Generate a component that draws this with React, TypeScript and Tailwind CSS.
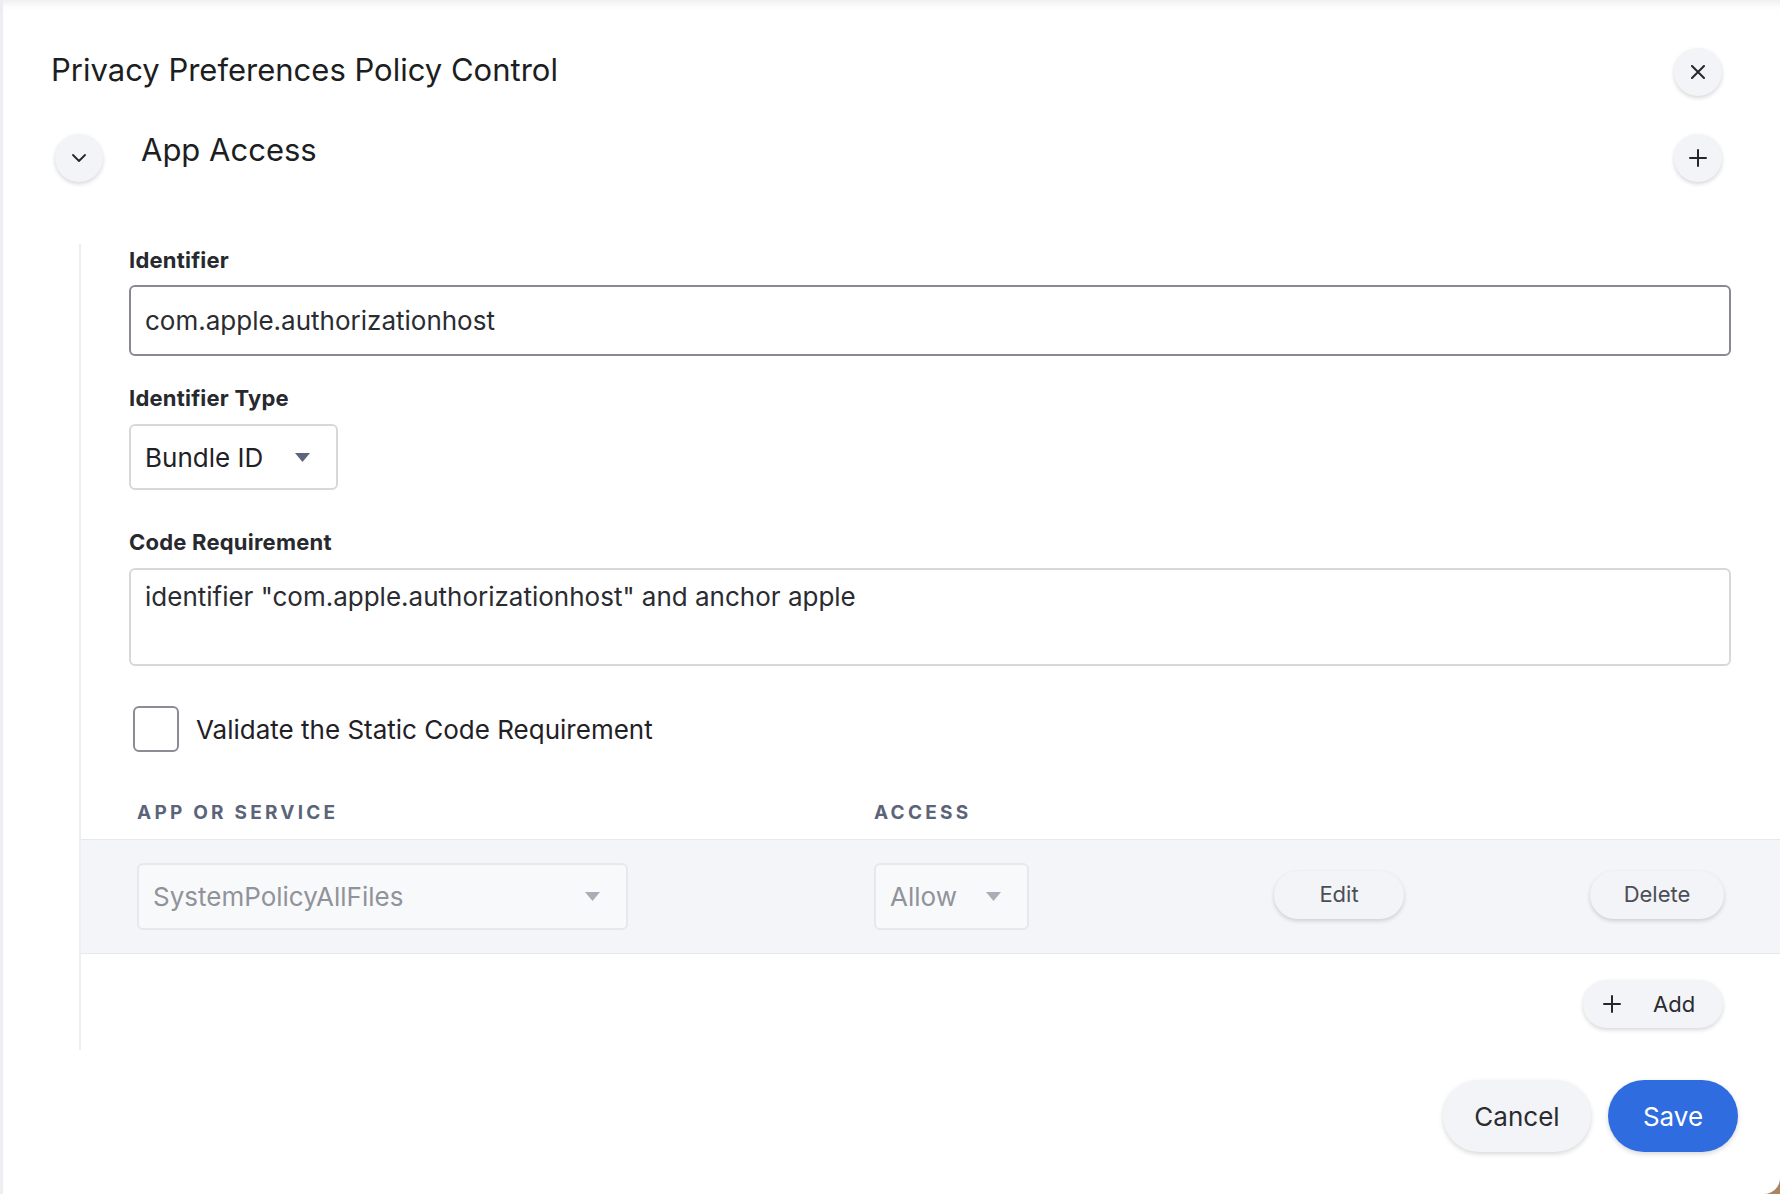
import React from "react";

const font = { fontFamily: "Inter, 'Liberation Sans', sans-serif" };

const Caret = ({ color }: { color: string }) => (
    <svg width="15" height="9" viewBox="0 0 15 9">
        <path d="M0 0 L15 0 L7.5 9 Z" fill={color} />
    </svg>
);

const CircleButton = ({ children }: { children: React.ReactNode }) => (
    <button className="flex h-[48px] w-[48px] items-center justify-center rounded-full bg-[#f3f4f7] shadow-[0_2px_4px_rgba(0,0,0,0.16)]">
        {children}
    </button>
);

const PillButton = ({ label, width }: { label: string; width: string }) => (
    <button
        className={`flex h-[48px] ${width} items-center justify-center rounded-full bg-[#f3f4f7] text-[22px] text-[#4b4e55] shadow-[0_2px_4px_rgba(0,0,0,0.16)]`}
    >
        {label}
    </button>
);

export default function App() {
    return (
        <div className="flex h-[1194px] w-[1780px] bg-[#a8845f]" style={font}>
            {/* left edge */}
            <div className="w-[3px] bg-[#eceef2]" />

            <div className="flex-1 rounded-br-[16px] bg-white shadow-[inset_0_9px_8px_-6px_rgba(0,0,0,0.08)]">
                {/* Title row */}
                <div className="flex h-[96px] items-end justify-between pl-[48px] pr-[58px]">
                    <h1 className="mb-[8px] text-[31px] leading-[36px] text-[#1c1e22]">
                        Privacy Preferences Policy Control
                    </h1>
                    <CircleButton>
                        <svg width="14" height="14" viewBox="0 0 14 14">
                            <path d="M1 1 L13 13 M13 1 L1 13" stroke="#25272c" strokeWidth="2" strokeLinecap="round" />
                        </svg>
                    </CircleButton>
                </div>

                {/* Section header */}
                <div className="mt-[38px] flex items-start pl-[52px] pr-[58px]">
                    <CircleButton>
                        <svg width="14" height="8" viewBox="0 0 14 8">
                            <path d="M1 1 L7 7 L13 1" fill="none" stroke="#25272c" strokeWidth="1.8" strokeLinecap="round" strokeLinejoin="round" />
                        </svg>
                    </CircleButton>
                    <h2 className="ml-[38px] mt-[-3px] flex-1 text-[31px] leading-[38px] text-[#1c1e22]">
                        App Access
                    </h2>
                    <CircleButton>
                        <svg width="18" height="18" viewBox="0 0 18 18">
                            <path d="M9 1 L9 17 M1 9 L17 9" stroke="#25272c" strokeWidth="2" strokeLinecap="round" />
                        </svg>
                    </CircleButton>
                </div>

                {/* Section body */}
                <div className="ml-[76px] mt-[62px] border-l-2 border-[#eceef1] pb-[22px] pt-[4px]">
                    <div className="pl-[48px] pr-[49px]">
                        <label className="block text-[22px] font-bold leading-[24px] tracking-[0.01em] text-[#27292e]">
                            Identifier
                        </label>
                        <div className="mt-[13px] flex h-[71px] items-center rounded-[6px] border-2 border-[#878b91] px-[14px] text-[26px] text-[#2a2c31]">
                            com.apple.authorizationhost
                        </div>

                        <label className="mt-[30px] block text-[22px] font-bold leading-[24px] tracking-[0.01em] text-[#27292e]">
                            Identifier Type
                        </label>
                        <div className="mt-[14px] flex h-[66px] w-[209px] items-center justify-between rounded-[6px] border-2 border-[#d6d8dc] pl-[14px] pr-[26px] text-[26px] text-[#1f2126]">
                            <span>Bundle ID</span>
                            <Caret color="#5c6579" />
                        </div>

                        <label className="mt-[40px] block text-[22px] font-bold leading-[24px] tracking-[0.01em] text-[#27292e]">
                            Code Requirement
                        </label>
                        <div className="mt-[14px] h-[98px] rounded-[6px] border-2 border-[#d6d8dc] px-[14px] pt-[11px] text-[26px] leading-[32px] text-[#2a2c31]">
                            identifier "com.apple.authorizationhost" and anchor apple
                        </div>

                        <div className="mt-[40px] flex items-center">
                            <div className="ml-[4px] h-[46px] w-[46px] rounded-[6px] border-2 border-[#8a8d93]" />
                            <span className="ml-[17px] text-[26px] text-[#1f2126]">
                                Validate the Static Code Requirement
                            </span>
                        </div>
                    </div>

                    {/* Table */}
                    <div className="mt-[50px] flex pl-[56px] text-[19px] font-bold leading-[22px] tracking-[0.17em] text-[#5b6478]">
                        <span className="w-[737px]">APP OR SERVICE</span>
                        <span>ACCESS</span>
                    </div>
                    <div className="mt-[15px] flex h-[115px] items-center border-y border-[#e6e8ec] bg-[#f4f5f8] pl-[56px] pr-[56px]">
                        <div className="flex h-[67px] w-[491px] items-center justify-between rounded-[6px] border-2 border-[#e6e8ec] bg-[#f8f9fb] pl-[14px] pr-[26px] text-[26px] text-[#909399]">
                            <span>SystemPolicyAllFiles</span>
                            <Caret color="#a9adb5" />
                        </div>
                        <div className="ml-[246px] flex h-[67px] w-[155px] items-center justify-between rounded-[6px] border-2 border-[#e6e8ec] bg-[#f8f9fb] pl-[14px] pr-[26px] text-[26px] text-[#909399]">
                            <span>Allow</span>
                            <Caret color="#a9adb5" />
                        </div>
                        <div className="ml-[245px] -mt-[4px]">
                            <PillButton label="Edit" width="w-[130px]" />
                        </div>
                        <div className="ml-auto -mt-[4px]">
                            <PillButton label="Delete" width="w-[134px]" />
                        </div>
                    </div>

                    <div className="mt-[26px] flex justify-end pr-[57px]">
                        <button className="flex h-[48px] w-[140px] items-center rounded-full bg-[#f3f4f7] pl-[20px] text-[22px] text-[#2a2c31] shadow-[0_2px_4px_rgba(0,0,0,0.16)]">
                            <svg width="18" height="18" viewBox="0 0 18 18">
                                <path d="M9 1 L9 17 M1 9 L17 9" stroke="#25272c" strokeWidth="2" strokeLinecap="round" />
                            </svg>
                            <span className="ml-[32px]">Add</span>
                        </button>
                    </div>
                </div>

                {/* Footer */}
                <div className="mt-[30px] flex justify-end gap-[17px] pr-[42px]">
                    <button className="h-[72px] w-[148px] rounded-full bg-[#f3f4f7] text-[26px] text-[#2a2c31] shadow-[0_2px_5px_rgba(0,0,0,0.16)]">
                        Cancel
                    </button>
                    <button className="h-[72px] w-[130px] rounded-full bg-[#2e6ce0] text-[26px] text-white shadow-[0_2px_5px_rgba(0,0,0,0.16)]">
                        Save
                    </button>
                </div>
            </div>
        </div>
    );
}
